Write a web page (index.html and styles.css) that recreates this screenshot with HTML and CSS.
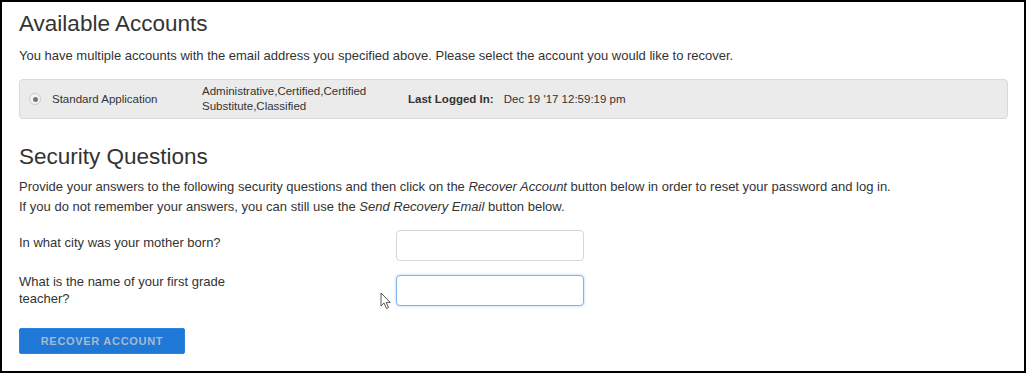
FILE: index.html
```html
<!DOCTYPE html>
<html lang="en">
<head>
  <meta charset="UTF-8" />
  <title>Recover Account</title>
  <link rel="stylesheet" href="styles.css">
</head>
<body>
  <div class="frame">

    <h2>Available Accounts</h2>
    <p class="intro">You have multiple accounts with the email address you specified above. Please select the account you would like to recover.</p>

    <div class="account">
      <span class="radio"><span class="dot"></span></span>
      <span class="app">Standard Application</span>
      <span class="roles">Administrative,Certified,Certified<br>Substitute,Classified</span>
      <span class="last"><b>Last Logged In:</b> Dec 19 '17 12:59:19 pm</span>
    </div>

    <h2 class="second">Security Questions</h2>
    <p class="intro help">Provide your answers to the following security questions and then click on the <i>Recover Account</i> button below in order to reset your password and log in.<br>
    If you do not remember your answers, you can still use the <i>Send Recovery Email</i> button below.</p>

    <div class="question first">
      <label>In what city was your mother born?</label>
      <input type="text" />
    </div>

    <div class="question">
      <label>What is the name of your first grade teacher?</label>
      <span class="field">
        <input type="text" class="focus" />
        <svg class="cursor" width="12" height="18" viewBox="0 0 12 18">
          <path d="M1 1 L1 14 L4 11 L6.5 16.5 L8.5 15.6 L6.2 10.4 L10.2 10.4 Z" fill="#fff" stroke="#555" stroke-width="1"/>
        </svg>
      </span>
    </div>

    <button>Recover Account</button>

  </div>
</body>
</html>
```

FILE: styles.css
```css
body {
  margin: 0;
  font-family: 'Liberation Sans', Arial, sans-serif;
  color: #333;
  background: #fff;
}

.frame {
  box-sizing: border-box;
  width: 1026px;
  height: 373px;
  border: 2px solid #000;
  padding: 8px 16px 0 17px;
}

h2 {
  font-weight: normal;
  font-size: 22.5px;
  line-height: 28px;
  margin: 0 0 8px;
  color: #333;
}

h2.second {
  margin-top: 24px;
  margin-bottom: 6px;
}

.intro {
  font-size: 13px;
  line-height: 20px;
  margin: 0;
}

.account {
  display: flex;
  align-items: center;
  margin-top: 13px;
  height: 38px;
  background: #ebebeb;
  border: 1px solid #d9d9d9;
  border-radius: 4px;
  font-size: 11.5px;
  line-height: 15px;
}

.radio {
  width: 10px;
  height: 10px;
  margin-left: 9px;
  border-radius: 50%;
  background: #f4f4f4;
  border: 1px solid #ccc;
  display: flex;
  align-items: center;
  justify-content: center;
}

.dot {
  width: 5px;
  height: 5px;
  border-radius: 50%;
  background: #777;
}

.app {
  margin-left: 11px;
  width: 150px;
}

.roles {
  width: 206px;
}

.last b {
  margin-right: 7px;
}

.question {
  display: flex;
  align-items: center;
  margin-top: 12px;
  font-size: 13px;
  line-height: 17px;
}

.question.first {
  margin-top: 13px;
}

.question.first label {
  margin-bottom: 7px;
}

.question label {
  width: 250px;
  margin-right: 127px;
}

.field {
  position: relative;
}

input {
  box-sizing: border-box;
  width: 188px;
  height: 31px;
  border: 1px solid #d6d6d6;
  border-radius: 4px;
  background: #fff;
}

input.focus {
  border-color: #7fb4ea;
  box-shadow: 0 0 3px rgba(102, 160, 230, 0.5);
}

.cursor {
  position: absolute;
  left: -16px;
  top: 17px;
}

button {
  margin-top: 21px;
  width: 166px;
  height: 26px;
  background: #1f78d6;
  border: 1px solid #2a83e0;
  border-radius: 2px;
  color: #a7b9cf;
  font-family: 'Liberation Sans', Arial, sans-serif;
  font-weight: bold;
  font-size: 11px;
  letter-spacing: 0.7px;
  text-transform: uppercase;
}
```
